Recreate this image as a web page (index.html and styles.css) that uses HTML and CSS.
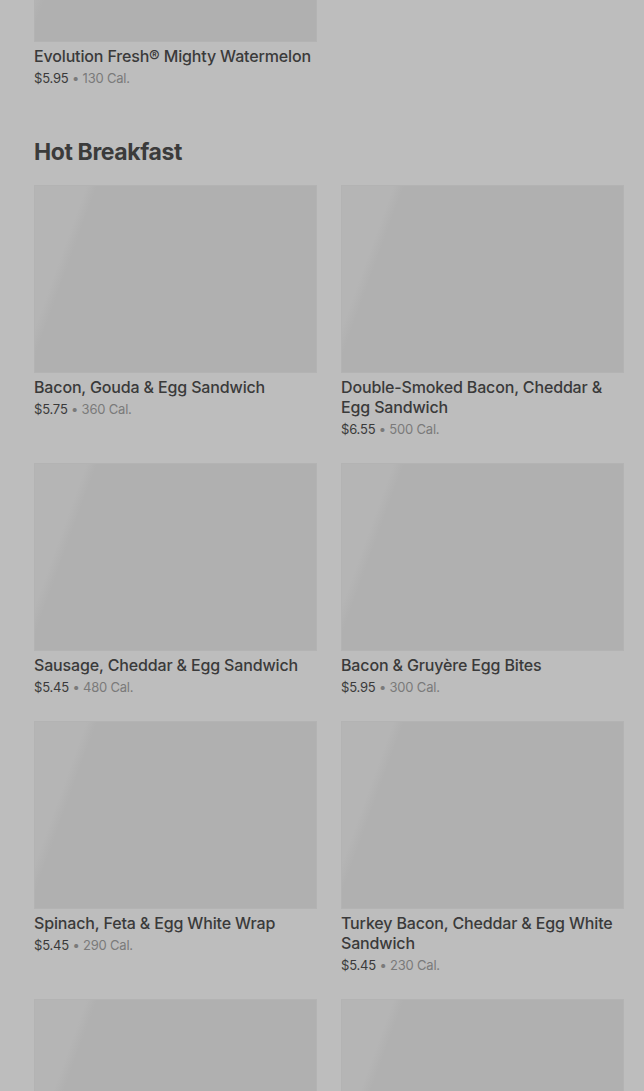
FILE: index.html
```html
<!DOCTYPE html>
<html lang="en">
<head>
<meta charset="utf-8">
<title>Menu</title>
<link rel="stylesheet" href="styles.css">
</head>
<body>
<main class="page">
  <section class="section section-first">
    <div class="grid">
      <article class="card">
        <div class="thumb"></div>
        <h3 class="name">Evolution Fresh® Mighty Watermelon</h3>
        <p class="meta"><span class="price">$5.95</span> • 130 Cal.</p>
      </article>
    </div>
  </section>

  <section class="section">
    <h2 class="heading">Hot Breakfast</h2>
    <div class="grid">
      <article class="card">
        <div class="thumb"></div>
        <h3 class="name">Bacon, Gouda &amp; Egg Sandwich</h3>
        <p class="meta"><span class="price">$5.75</span> • 360 Cal.</p>
      </article>
      <article class="card">
        <div class="thumb"></div>
        <h3 class="name">Double-Smoked Bacon, Cheddar &amp; Egg Sandwich</h3>
        <p class="meta"><span class="price">$6.55</span> • 500 Cal.</p>
      </article>
      <article class="card">
        <div class="thumb"></div>
        <h3 class="name">Sausage, Cheddar &amp; Egg Sandwich</h3>
        <p class="meta"><span class="price">$5.45</span> • 480 Cal.</p>
      </article>
      <article class="card">
        <div class="thumb"></div>
        <h3 class="name">Bacon &amp; Gruyère Egg Bites</h3>
        <p class="meta"><span class="price">$5.95</span> • 300 Cal.</p>
      </article>
      <article class="card">
        <div class="thumb"></div>
        <h3 class="name">Spinach, Feta &amp; Egg White Wrap</h3>
        <p class="meta"><span class="price">$5.45</span> • 290 Cal.</p>
      </article>
      <article class="card">
        <div class="thumb"></div>
        <h3 class="name">Turkey Bacon, Cheddar &amp; Egg White Sandwich</h3>
        <p class="meta"><span class="price">$5.45</span> • 230 Cal.</p>
      </article>
      <article class="card card-cut">
        <div class="thumb"></div>
      </article>
      <article class="card card-cut">
        <div class="thumb"></div>
      </article>
    </div>
  </section>
</main>
</body>
</html>
```

FILE: styles.css
```css
html, body {
  margin: 0;
  padding: 0;
  background: #bdbdbd;
  overflow: hidden;
}

body {
  font-family: Inter, "Noto Sans", "Liberation Sans", sans-serif;
  color: #3a3a3a;
}

.page {
  padding: 0 20px 0 34px;
}

.section-first {
  margin-top: -146px;
}

.heading {
  margin: 48px 0 17px;
  font-size: 23px;
  line-height: 32px;
  font-weight: 700;
  letter-spacing: -0.4px;
  color: #3b3b3b;
}

.grid {
  display: grid;
  grid-template-columns: 283px 283px;
  column-gap: 24px;
  row-gap: 24px;
}

.card {
  display: flex;
  flex-direction: column;
}

.thumb {
  height: 188px;
  background: linear-gradient(110deg, #b5b5b5 0%, #b5b5b5 15%, #b0b0b0 18%, #b0b0b0 100%);
  box-shadow: inset 0 0 0 1px #b3b3b3;
}

.name {
  margin: 4px 0 0;
  font-size: 16px;
  line-height: 20px;
  font-weight: 500;
  color: #3a3a3a;
  letter-spacing: -0.15px;
}

.meta {
  margin: 2px 0 0;
  font-size: 13px;
  line-height: 20px;
  letter-spacing: -0.2px;
  color: #7a7a7a;
}

.price {
  color: #3a3a3a;
}
```
